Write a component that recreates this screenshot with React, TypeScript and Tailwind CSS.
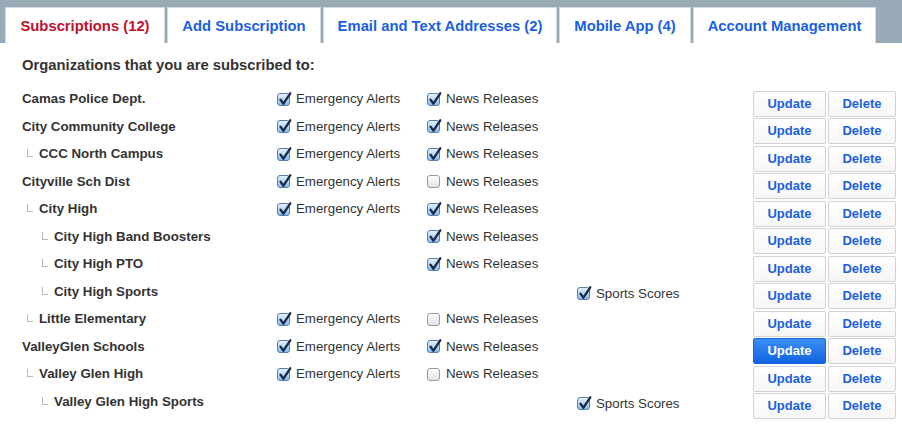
import React from "react";

type Row = {
  name: string;
  level: number;
  ea?: boolean | null;
  nr?: boolean | null;
  ss?: boolean | null;
  active?: boolean;
};

const rows: Row[] = [
  { name: "Camas Police Dept.", level: 0, ea: true, nr: true },
  { name: "City Community College", level: 0, ea: true, nr: true },
  { name: "CCC North Campus", level: 1, ea: true, nr: true },
  { name: "Cityville Sch Dist", level: 0, ea: true, nr: false },
  { name: "City High", level: 1, ea: true, nr: true },
  { name: "City High Band Boosters", level: 2, nr: true },
  { name: "City High PTO", level: 2, nr: true },
  { name: "City High Sports", level: 2, ss: true },
  { name: "Little Elementary", level: 1, ea: true, nr: false },
  { name: "ValleyGlen Schools", level: 0, ea: true, nr: true, active: true },
  { name: "Valley Glen High", level: 1, ea: true, nr: false },
  { name: "Valley Glen High Sports", level: 2, ss: true },
];

function Check({ checked }: { checked: boolean }) {
  if (checked) {
    return (
      <span className="relative inline-block w-[13px] h-[13px] rounded-[3px] border border-[#5b7ea6] bg-gradient-to-b from-[#e4f1ff] to-[#86bdf0] shrink-0">
        <svg
          viewBox="0 0 13 13"
          className="absolute left-[-1px] top-[-3px] w-[15px] h-[15px]"
        >
          <path
            d="M3 7.5 L5.6 11 L11.5 2"
            fill="none"
            stroke="#1b2a44"
            strokeWidth="2"
            strokeLinecap="round"
            strokeLinejoin="round"
          />
        </svg>
      </span>
    );
  }
  return (
    <span className="inline-block w-[13px] h-[13px] rounded-[3px] border border-[#9a9a9a] bg-gradient-to-b from-white to-[#e2e2e2] shrink-0" />
  );
}

function Opt({ checked, label }: { checked: boolean; label: string }) {
  return (
    <div className="flex items-center gap-[6px] text-[13.3px] text-[#333] leading-[16px]">
      <Check checked={checked} />
      <span>{label}</span>
    </div>
  );
}

const tabs = [
  { label: "Subscriptions (12)", w: "w-[160px]", active: true },
  { label: "Add Subscription", w: "w-[154px]" },
  { label: "Email and Text Addresses (2)", w: "w-[234px]" },
  { label: "Mobile App (4)", w: "w-[132px]" },
  { label: "Account Management", w: "w-[183px]" },
];

export default function App() {
  return (
    <div
      className="w-[902px] h-[430px] bg-white overflow-hidden"
      style={{ fontFamily: '"Liberation Sans", Arial, sans-serif' }}
    >
      <div className="h-[43px] bg-[#98aab6] pt-[7px] pl-[5px] flex gap-[2px]">
        {tabs.map((t) => (
          <div
            key={t.label}
            className={`${t.w} h-[36px] pt-[1px] bg-white border border-b-0 border-[#d6dadd] flex items-center justify-center text-[14.8px] font-bold ${
              t.active ? "text-[#c2102b]" : "text-[#1b5fe0]"
            }`}
          >
            {t.label}
          </div>
        ))}
      </div>
      <div className="pl-[22px] pt-[14px] text-[14.8px] font-bold text-[#333] leading-[16px]">
        Organizations that you are subscribed to:
      </div>
      <div className="mt-[16px] flex flex-col">
        {rows.map((r, i) => (
          <div key={i} className="h-[27.5px] flex">
            <div className="w-[277px] pl-[22px] pt-[2px] flex">
              {r.level > 0 && (
                <span
                  className={`${
                    r.level === 1 ? "ml-[5px]" : "ml-[20px]"
                  } mt-[3px] w-[6px] h-[8px] border-l border-b border-[#b8b8b8] mr-[6px]`}
                />
              )}
              <span className="text-[13.3px] font-bold text-[#333] leading-[16px] whitespace-nowrap">
                {r.name}
              </span>
            </div>
            <div className="w-[150px] pt-[2px]">
              {r.ea !== undefined && r.ea !== null && (
                <Opt checked={r.ea} label="Emergency Alerts" />
              )}
            </div>
            <div className="w-[150px] pt-[2px]">
              {r.nr !== undefined && r.nr !== null && (
                <Opt checked={r.nr} label="News Releases" />
              )}
            </div>
            <div className="w-[176px] pt-[4px]">
              {r.ss && <Opt checked={true} label="Sports Scores" />}
            </div>
            <div className="flex gap-[2px] pt-[1.5px]">
              <button
                className={`w-[73px] h-[26px] rounded-[2px] border text-[13px] font-bold ${
                  r.active
                    ? "bg-gradient-to-b from-[#3b8ef5] to-[#0f63e0] border-[#1a66d8] text-white"
                    : "bg-gradient-to-b from-white to-[#f6f6f6] border-[#d2d2d2] text-[#1b5fe0]"
                }`}
              >
                Update
              </button>
              <button className="w-[68px] h-[26px] rounded-[2px] border bg-gradient-to-b from-white to-[#f6f6f6] border-[#d2d2d2] text-[13px] font-bold text-[#1b5fe0]">
                Delete
              </button>
            </div>
          </div>
        ))}
      </div>
    </div>
  );
}
